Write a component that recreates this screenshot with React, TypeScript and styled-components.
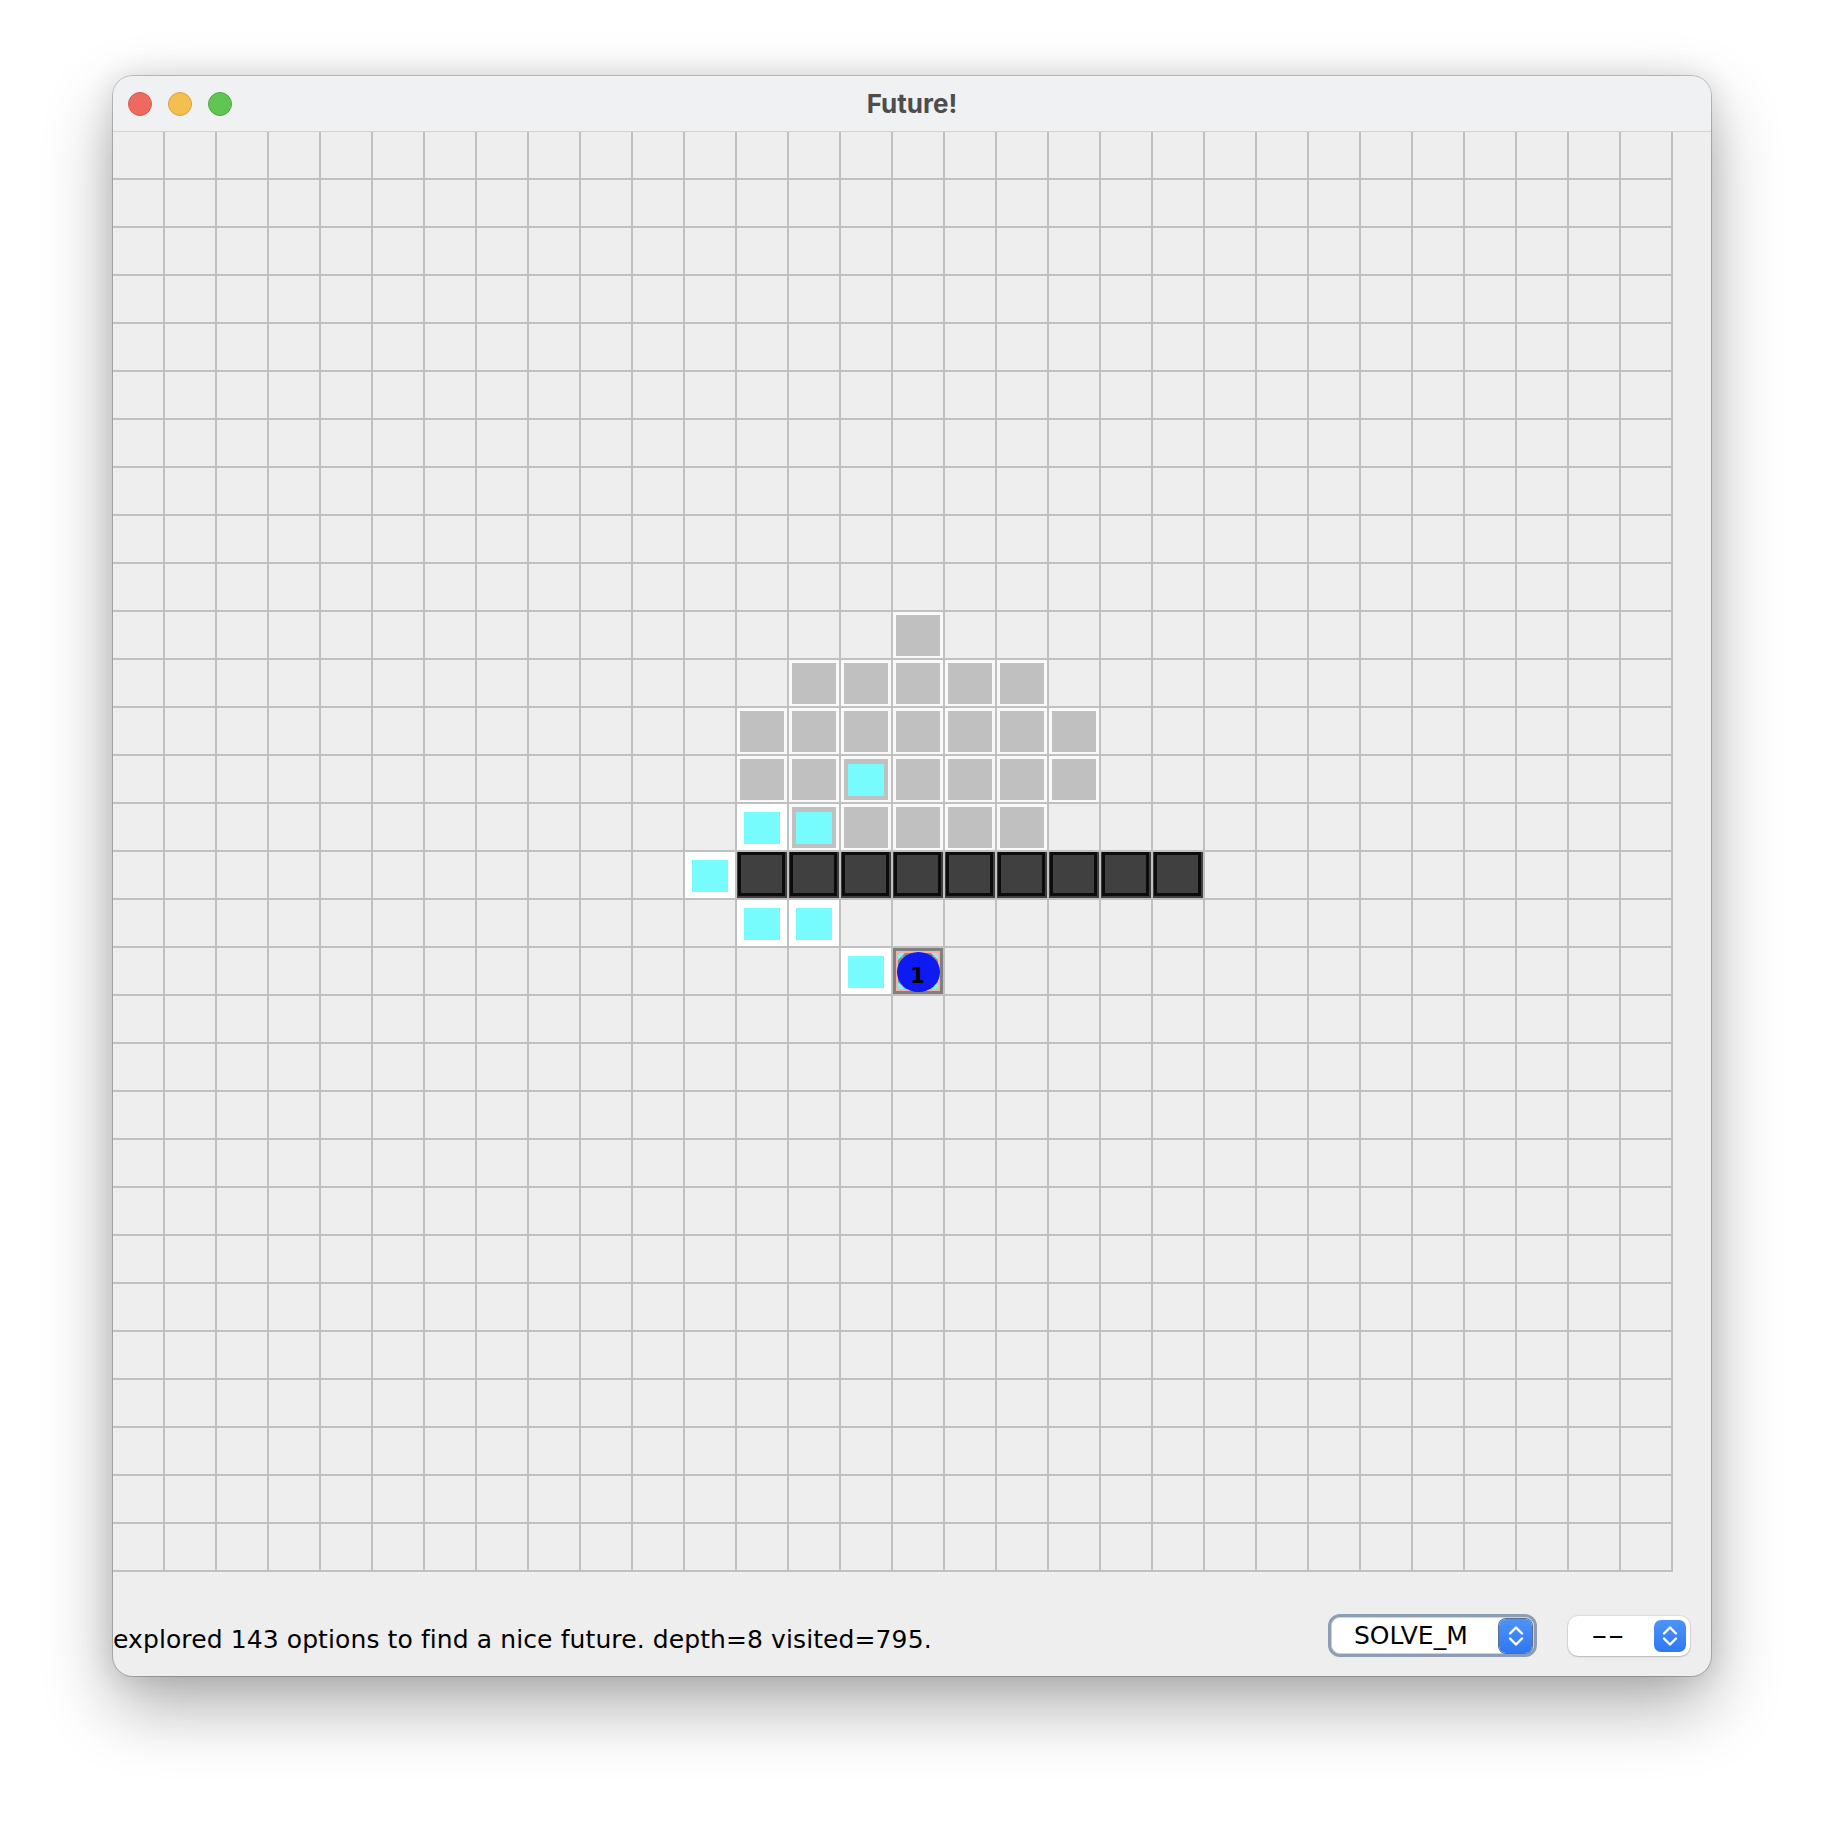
import React from "react";
import styled, { createGlobalStyle } from "styled-components";

const GlobalStyle = createGlobalStyle`
  html, body {
    margin: 0;
    padding: 0;
    background: #ffffff;
  }
  body {
    font-family: "DejaVu Sans", "Liberation Sans", sans-serif;
  }
`;

const Page = styled.div`
  width: 1824px;
  height: 1824px;
  box-sizing: border-box;
  padding: 76px 0 0 113px;
  background: #ffffff;
`;

const Window = styled.div`
  width: 1598px;
  height: 1600px;
  border-radius: 20px;
  overflow: hidden;
  background: #eeeeee;
  box-shadow: 0 0 0 1px rgba(0, 0, 0, 0.2), 0 30px 70px rgba(0, 0, 0, 0.32),
    0 0 30px rgba(0, 0, 0, 0.12);
  display: flex;
  flex-direction: column;
`;

const TitleBar = styled.div`
  flex: none;
  height: 56px;
  box-sizing: border-box;
  border-bottom: 1px solid #d2d2d4;
  background: #f0f1f3;
  display: grid;
  grid-template-columns: 1fr auto 1fr;
  align-items: center;
`;

const Lights = styled.div`
  display: flex;
  gap: 16px;
  padding-left: 15px;
`;

const Light = styled.span<{ $fill: string; $edge: string }>`
  width: 24px;
  height: 24px;
  box-sizing: border-box;
  border-radius: 50%;
  background: ${(p) => p.$fill};
  border: 1px solid ${(p) => p.$edge};
`;

const Title = styled.div`
  font-family: Inter, "Open Sans", sans-serif;
  font-weight: 700;
  font-size: 26px;
  line-height: 1;
  color: #4d4d4d;
`;

const Board = styled.div`
  flex: none;
  display: grid;
  grid-template-columns: repeat(30, 52px);
  grid-template-rows: repeat(30, 48px);
`;

type Kind = "empty" | "gray" | "dark" | "cyanWhite" | "cyanGray" | "piece";

const cellBg: Record<Kind, string> = {
  empty: "#eeeeee",
  gray: "#f9f9f9",
  cyanGray: "#f9f9f9",
  dark: "#404040",
  cyanWhite: "#ffffff",
  piece: "#808080",
};

const cellPad: Record<Kind, string> = {
  empty: "0",
  gray: "3px 3px 2px 3px",
  cyanGray: "3px 3px 2px 3px",
  dark: "0 2px 2px 1px",
  cyanWhite: "8px 7px 6px 7px",
  piece: "0",
};

const Cell = styled.div<{ $kind: Kind }>`
  box-sizing: border-box;
  border-right: 2px solid #c0c0c0;
  border-bottom: 2px solid #c0c0c0;
  background: ${(p) => cellBg[p.$kind]};
  padding: ${(p) => cellPad[p.$kind]};
  display: flex;
`;

const GrayFill = styled.div<{ $inset?: boolean }>`
  flex: 1;
  display: flex;
  background: #c0c0c0;
  padding: ${(p) => (p.$inset ? "5px 4px 4px 4px" : "0")};
`;

const CyanFill = styled.div`
  flex: 1;
  background: #76fcfc;
`;

const DarkBox = styled.div`
  flex: 1;
  background: #404040;
  border: 3px solid #0c0c0c;
`;

const PieceArt = styled.svg`
  display: block;
  width: 50px;
  height: 46px;
`;

const StatusBar = styled.div`
  flex: 1;
  display: flex;
  align-items: flex-end;
  padding: 0 21px 19px 0;
  box-sizing: border-box;
`;

const StatusText = styled.div`
  flex: 1;
  font-family: "DejaVu Sans", "Liberation Sans", sans-serif;
  font-size: 25px;
  line-height: 25px;
  letter-spacing: 0.1px;
  margin-bottom: 5px;
  color: #000000;
  white-space: nowrap;
`;

const Controls = styled.div`
  display: flex;
  align-items: center;
  gap: 31px;
`;

const Combo = styled.div<{ $focused?: boolean }>`
  box-sizing: border-box;
  display: flex;
  align-items: center;
  background: #ffffff;
  width: ${(p) => (p.$focused ? "209px" : "122px")};
  height: ${(p) => (p.$focused ? "43px" : "40px")};
  border-radius: ${(p) => (p.$focused ? "12px" : "10px")};
  border: ${(p) => (p.$focused ? "3px solid #8d9db4" : "none")};
  padding: ${(p) => (p.$focused ? "0 2px 0 23px" : "0 4px 0 23px")};
  box-shadow: ${(p) =>
    p.$focused
      ? "inset 0 0 0 1px #c9d3e0"
      : "0 0 0 1px rgba(0,0,0,0.06), 0 1px 2px rgba(0,0,0,0.18)"};
`;

const ComboText = styled.span`
  flex: 1;
  font-family: "DejaVu Sans", "Liberation Sans", sans-serif;
  font-size: 25px;
  line-height: 1;
  color: #000000;
  white-space: nowrap;
`;

const Dashes = styled.span`
  display: inline-block;
  transform: scaleX(1.85);
  transform-origin: left center;
`;

const ArrowButton = styled.div<{ $focused?: boolean }>`
  width: ${(p) => (p.$focused ? "33px" : "32px")};
  height: ${(p) => (p.$focused ? "34px" : "32px")};
  box-sizing: border-box;
  border-radius: 7px;
  background: linear-gradient(#4d93f8, #2e78f3);
  display: flex;
  align-items: center;
  justify-content: center;
  box-shadow: ${(p) => (p.$focused ? "0 0 0 1px #5d6f8c" : "none")};
`;

const Chevrons = () => (
  <svg width="16" height="22" viewBox="0 0 16 22">
    <polyline
      points="2,8.5 8,2.5 14,8.5"
      fill="none"
      stroke="#ffffff"
      strokeWidth="2.4"
      strokeLinecap="round"
      strokeLinejoin="round"
    />
    <polyline
      points="2,13.5 8,19.5 14,13.5"
      fill="none"
      stroke="#ffffff"
      strokeWidth="2.4"
      strokeLinecap="round"
      strokeLinejoin="round"
    />
  </svg>
);

const Piece = () => (
  <PieceArt viewBox="0 0 50 46">
    <rect x="0" y="0" width="50" height="46" fill="#808080" />
    <rect x="3" y="3" width="44" height="40" fill="#f2b2aa" />
    <rect x="5" y="5" width="40" height="36" fill="#8a8a8a" />
    <polygon points="5,5 12,5 5,12" fill="#76fcfc" />
    <polygon points="45,5 38,5 45,12" fill="#76fcfc" />
    <polygon points="5,41 12,41 5,34" fill="#76fcfc" />
    <polygon points="45,41 38,41 45,34" fill="#76fcfc" />
    <line x1="5" y1="5" x2="45" y2="41" stroke="#f2b2aa" strokeWidth="1" />
    <line x1="45" y1="5" x2="5" y2="41" stroke="#f2b2aa" strokeWidth="1" />
    <ellipse cx="25.5" cy="24" rx="21.5" ry="20" fill="#0d1bf2" />
    <text
      x="24.5"
      y="35"
      textAnchor="middle"
      fontFamily="'DejaVu Sans', sans-serif"
      fontWeight="700"
      fontSize="21"
      fill="#000000"
    >
      1
    </text>
  </PieceArt>
);

const layout: Record<string, Kind> = {};
const put = (r: number, cols: number[], k: Kind) => {
  cols.forEach((c) => {
    layout[`${r},${c}`] = k;
  });
};
const range = (a: number, b: number) =>
  Array.from({ length: b - a + 1 }, (_, i) => a + i);

put(10, [15], "gray");
put(11, range(13, 17), "gray");
put(12, range(12, 18), "gray");
put(13, [12, 13, 15, 16, 17, 18], "gray");
put(13, [14], "cyanGray");
put(14, [12], "cyanWhite");
put(14, [13], "cyanGray");
put(14, range(14, 17), "gray");
put(15, [11], "cyanWhite");
put(15, range(12, 20), "dark");
put(16, [12, 13], "cyanWhite");
put(17, [14], "cyanWhite");
put(17, [15], "piece");

const renderInner = (k: Kind) => {
  switch (k) {
    case "gray":
      return <GrayFill />;
    case "cyanGray":
      return (
        <GrayFill $inset>
          <CyanFill />
        </GrayFill>
      );
    case "cyanWhite":
      return <CyanFill />;
    case "dark":
      return <DarkBox />;
    case "piece":
      return <Piece />;
    default:
      return null;
  }
};

export default function App() {
  const cells = [];
  for (let r = 0; r < 30; r++) {
    for (let c = 0; c < 30; c++) {
      const k: Kind = layout[`${r},${c}`] ?? "empty";
      cells.push(
        <Cell key={`${r}-${c}`} $kind={k}>
          {renderInner(k)}
        </Cell>
      );
    }
  }

  return (
    <>
      <GlobalStyle />
      <Page>
        <Window>
          <TitleBar>
            <Lights>
              <Light $fill="#ee6a5f" $edge="#d8594e" />
              <Light $fill="#f5bf4f" $edge="#d9a23f" />
              <Light $fill="#61c554" $edge="#4ea843" />
            </Lights>
            <Title>Future!</Title>
            <div />
          </TitleBar>
          <Board>{cells}</Board>
          <StatusBar>
            <StatusText>
              explored 143 options to find a nice future. depth=8 visited=795.
            </StatusText>
            <Controls>
              <Combo $focused>
                <ComboText>SOLVE_M</ComboText>
                <ArrowButton $focused>
                  <Chevrons />
                </ArrowButton>
              </Combo>
              <Combo>
                <ComboText>
                  <Dashes>--</Dashes>
                </ComboText>
                <ArrowButton>
                  <Chevrons />
                </ArrowButton>
              </Combo>
            </Controls>
          </StatusBar>
        </Window>
      </Page>
    </>
  );
}
